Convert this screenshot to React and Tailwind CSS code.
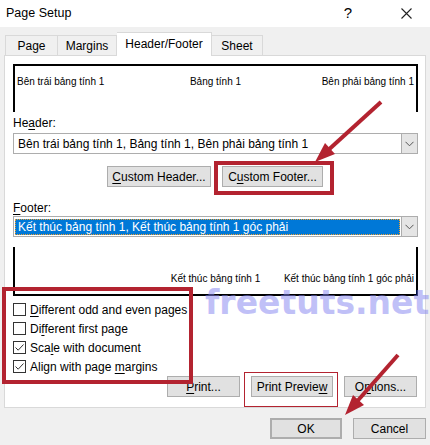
import React from "react";

const U = ({ children }) => <span className="underline underline-offset-2">{children}</span>;

function Btn({ w, children, className = "" }) {
  return (
    <div
      className={`h-[21px] ${w} flex items-center justify-center bg-[#e1e1e1] border border-[#adadad] text-[12px] text-black ${className}`}
    >
      {children}
    </div>
  );
}

function Check({ checked, children }) {
  return (
    <div className="h-[19px] flex items-center pl-[8px] gap-[4px]">
      <div className="w-[13px] h-[13px] border border-[#333] bg-white flex items-center justify-center">
        {checked && (
          <svg width="11" height="11" viewBox="0 0 11 11">
            <path d="M1.5 5.5 L4.2 8.2 L9.5 2.5" fill="none" stroke="#333" strokeWidth="1" />
          </svg>
        )}
      </div>
      <span className="text-[12px]">{children}</span>
    </div>
  );
}

function Combo({ selected, children }) {
  return (
    <div className="ml-[8px] w-[405px] h-[21px] border border-[#adadad] bg-white flex">
      <div className="flex-1 flex items-center pl-[1px] pr-[1px]">
        {selected ? (
          <div className="h-[16px] w-full bg-[#0078d7] text-white text-[12px] flex items-center pl-[2px] border border-dotted border-[#f0a030]">
            {children}
          </div>
        ) : (
          <div className="text-[12px] pl-[3px]">{children}</div>
        )}
      </div>
      <div className="w-[16px] h-full bg-[#e5e5e5] border-l border-[#adadad] flex items-center justify-center">
        <svg width="9" height="6" viewBox="0 0 9 6">
          <path d="M0.5 0.8 L4.5 4.8 L8.5 0.8" fill="none" stroke="#555" strokeWidth="1" />
        </svg>
      </div>
    </div>
  );
}

export default function App() {
  const red = "#b32330";
  return (
    <div
      className="relative w-[430px] h-[445px] bg-[#f0f0f0] overflow-hidden text-black"
      style={{ fontFamily: '"Liberation Sans", "Noto Sans", sans-serif' }}
    >
      {/* Title bar */}
      <div className="h-[27px] bg-white flex items-center justify-between pl-[6px]">
        <span className="text-[12.5px]">Page Setup</span>
        <div className="flex items-center h-full">
          <span className="text-[15px] w-[20px] text-center mr-[26px]">?</span>
          <svg width="46" height="27" viewBox="0 0 46 27">
            <path d="M17.5 8.5 L27.5 18.5 M27.5 8.5 L17.5 18.5" stroke="#222" strokeWidth="1.1" />
          </svg>
        </div>
      </div>

      {/* Tabs */}
      <div className="h-[28px] flex items-end pl-[5px]">
        <div className="h-[20px] w-[53px] border border-b-0 border-[#d9d9d9] flex items-center justify-center text-[12px]">Page</div>
        <div className="h-[20px] w-[59px] border border-b-0 border-l-0 border-[#d9d9d9] flex items-center justify-center text-[12px]">Margins</div>
        <div className="relative z-10 -mb-px h-[24px] w-[95px] bg-white border border-b-0 border-l-0 border-[#d9d9d9] flex items-center justify-center text-[12px] pb-[2px]">Header/Footer</div>
        <div className="h-[20px] w-[51px] border border-b-0 border-l-0 border-[#d9d9d9] flex items-center justify-center text-[12px]">Sheet</div>
      </div>

      {/* Panel */}
      <div className="ml-[4px] w-[422px] h-[353px] bg-white border border-[#d9d9d9] flex flex-col">
        {/* header preview */}
        <div className="mt-[8px] ml-[8px] w-[405px] h-[48px] border-t-2 border-l-2 border-r-2 border-black pt-[8px] px-[2px] grid grid-cols-3 text-[10px]">
          <span>Bên trái bảng tính 1</span>
          <span className="text-center">Bảng tính 1</span>
          <span className="text-right">Bên phải bảng tính 1</span>
        </div>

        <div className="mt-[2px] ml-[8px] h-[17px] text-[12px] flex items-center">
          He<U>a</U>der:
        </div>
        <div className="mt-[2px]">
          <Combo>Bên trái bảng tính 1, Bảng tính 1, Bên phải bảng tính 1</Combo>
        </div>

        <div className="mt-[12px] pl-[102px] flex gap-[11px]">
          <Btn w="w-[104px]"><U>C</U>ustom Header...</Btn>
          <Btn w="w-[101px]">C<U>u</U>stom Footer...</Btn>
        </div>

        <div className="mt-[12px] ml-[8px] h-[17px] text-[12px] flex items-center">
          <U>F</U>ooter:
        </div>
        <div className="mt-[0px]">
          <Combo selected>Kết thúc bảng tính 1, Kết thúc bảng tính 1 góc phải</Combo>
        </div>

        {/* footer preview */}
        <div className="mt-[10px] ml-[8px] w-[405px] h-[49px] border-l-2 border-r-2 border-b-2 border-black pb-[8px] px-[2px] grid grid-cols-3 items-end text-[10px]">
          <span></span>
          <span className="text-center whitespace-nowrap">Kết thúc bảng tính 1</span>
          <span className="text-right whitespace-nowrap">Kết thúc bảng tính 1 góc phải</span>
        </div>

        <div className="mt-[4px] flex flex-col">
          <Check><U>D</U>ifferent odd and even pages</Check>
          <Check>Di<U>f</U>ferent first page</Check>
          <Check checked>Sca<U>l</U>e with document</Check>
          <Check checked>Align with page <U>m</U>argins</Check>
        </div>

        <div className="flex justify-end gap-[11px] pr-[8px]">
          <Btn w="w-[73px]"><U>P</U>rint...</Btn>
          <Btn w="w-[82px]">Print Previe<U>w</U></Btn>
          <Btn w="w-[73px]">O<U>p</U>tions...</Btn>
        </div>
      </div>

      {/* OK / Cancel */}
      <div className="mt-[10px] flex justify-end gap-[11px] pr-[4px]">
        <Btn w="w-[72px]" className="border-2 border-[#0078d7]">OK</Btn>
        <Btn w="w-[73px]">Cancel</Btn>
      </div>

      {/* watermark */}
      <div
        className="absolute left-[205px] top-[286px] text-[33px] leading-none font-bold pointer-events-none"
        style={{ fontFamily: '"DejaVu Sans", sans-serif', color: "rgba(130,130,240,0.5)" }}
      >
        freetuts.net
      </div>

      {/* annotation boxes */}
      <div className="absolute left-[214px] top-[161px] w-[120px] h-[34px] border-4 border-[#b32330]" />
      <div className="absolute left-[2px] top-[287px] w-[191px] h-[97px] border-4 border-[#b32330]" />
      <div className="absolute left-[244px] top-[372px] w-[94px] h-[35px] border border-[#b32330]" />

      {/* arrows */}
      <svg className="absolute left-0 top-0 pointer-events-none" width="430" height="445">
        <line x1="381" y1="102" x2="325" y2="153" stroke={red} strokeWidth="4" />
        <polygon points="315,162 335,154 325,143" fill={red} />
        <line x1="398" y1="355" x2="353" y2="406" stroke={red} strokeWidth="4" />
        <polygon points="345,415 364,405 353,395" fill={red} />
      </svg>
    </div>
  );
}
